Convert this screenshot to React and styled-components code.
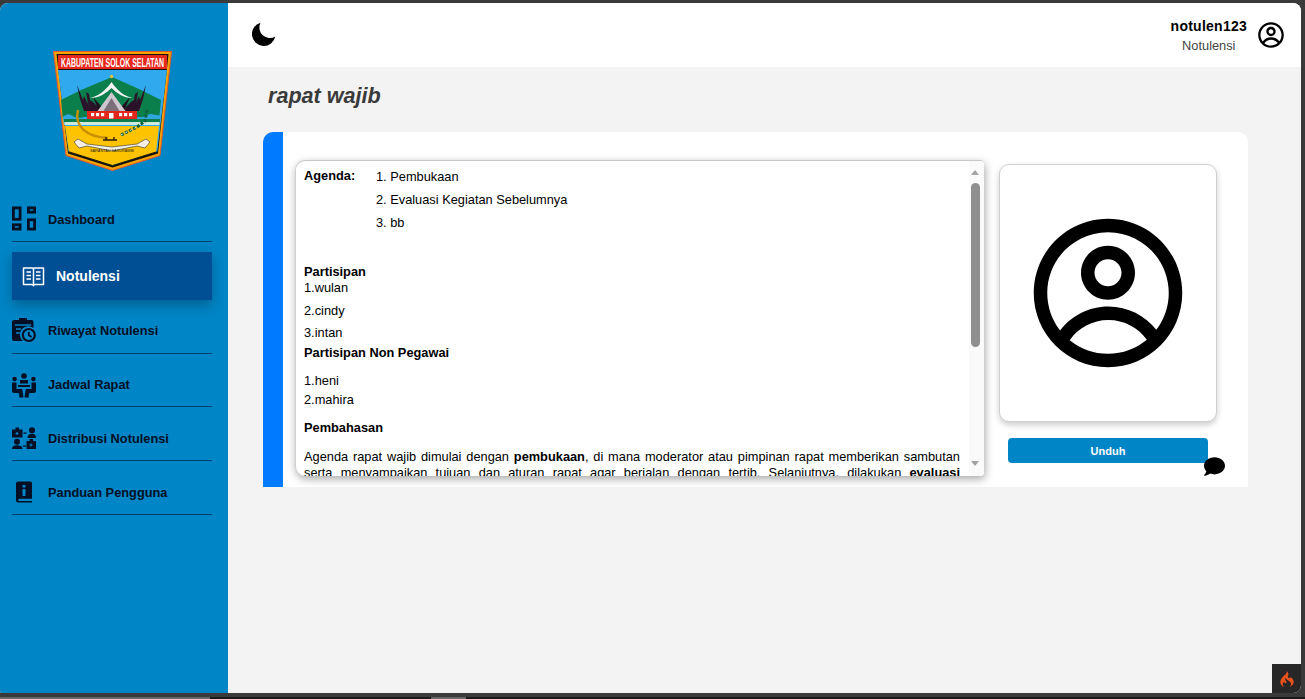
import React from "react";
import styled, { createGlobalStyle } from "styled-components";
import { CgProfile } from "react-icons/cg";
import { FaComment } from "react-icons/fa";
import { SiCodeigniter } from "react-icons/si";

const Global = createGlobalStyle`
  html, body { margin: 0; padding: 0; height: 100%; overflow: hidden; background: #3a3a3a; }
  #root { height: 100%; }
  * { box-sizing: border-box; }
`;

const Screen = styled.div`
  width: 1305px; height: 699px; padding-top: 3px; display: flex; flex-direction: column;
  background: #3a3a3a; font-family: "Liberation Sans", Arial, sans-serif; color: #000;
`;
const Frame = styled.div`
  position: relative; width: 1301px; height: 690px; display: flex; overflow: hidden;
  border-radius: 8px 8px 8px 2px; background: #f3f3f3;
`;
const TaskStrip = styled.div`
  margin-top: 4px; height: 2px; display: flex; background: #1a1a1a;
`;
const StripSeg = styled.div`
  height: 2px; background: #666; width: ${p => p.$w}px; margin-left: ${p => p.$l || 0}px;
`;

const Sidebar = styled.aside`
  width: 228px; flex: none; background: #0085c6; display: flex; flex-direction: column;
`;
const LogoWrap = styled.div`
  height: 194px; padding: 48px 0 0 53px;
`;
const Menu = styled.nav`
  display: flex; flex-direction: column; padding: 0 16px 0 12px;
`;
const MenuItem = styled.div`
  height: ${p => p.$h}px; display: flex; align-items: center; gap: 12px;
  border-bottom: 1px solid #04406e; font-size: 12.8px; font-weight: 700; color: #020f24;
  padding-top: ${p => p.$pt || 0}px;
`;
const ActiveItem = styled.div`
  height: 48px; margin-top: 10px; background: #004f95; color: #fff; display: flex; align-items: center;
  gap: 10px; padding-left: 10px; font-size: 14px; font-weight: 700;
  box-shadow: 0 5px 12px rgba(0,0,0,.28);
`;
const IconSlot = styled.svg`
  width: 24px; height: 26px; flex: none; display: block;
`;

const Main = styled.main`
  flex: 1; display: flex; flex-direction: column; min-width: 0;
`;
const Header = styled.header`
  height: 64px; flex: none; background: #fff; display: flex; align-items: center;
  justify-content: space-between; padding: 0 16px 0 24px;
`;
const MoonIcon = styled.svg`
  width: 24px; height: 24px; display: block; margin-top: -3px;
`;
const UserBox = styled.div`
  display: flex; align-items: center; gap: 10px;
`;
const UserText = styled.div`
  text-align: center; display: flex; flex-direction: column; gap: 4px;
`;
const UserName = styled.div`
  font-size: 14px; font-weight: 700; letter-spacing: .25px; line-height: 16px;
`;
const UserRole = styled.div`
  font-size: 12.8px; color: #444; line-height: 15px;
`;
const Title = styled.h1`
  margin: 0; padding: 16px 0 0 40px; height: 65px; font-size: 21.6px; font-style: italic;
  font-weight: 700; color: #3a3a3a; line-height: 26px;
`;
const Card = styled.section`
  margin-left: 35px; width: 985px; height: 355px; background: #fff; border-left: 20px solid #007bff;
  border-radius: 10px 10px 0 0; display: flex; gap: 15px; padding: 28px 0 0 12px; position: relative;
`;
const DocBox = styled.div`
  width: 689px; height: 316px; display: flex; overflow: hidden; background: #fff;
  border-top: 1px solid #c8c8c8; border-left: 1px solid #d0d0d0; border-radius: 10px 4px 4px 10px;
  box-shadow: 1px 3px 8px rgba(0,0,0,.35); font-size: 12.8px; line-height: 16px;
`;
const DocText = styled.div`
  flex: 1; min-width: 0; overflow: hidden; padding: 7px 9px 0 8px;
`;
const Rail = styled.div`
  width: 15px; flex: none; background: #fafafa; display: flex; flex-direction: column;
  align-items: flex-start; padding: 9px 4px 10px 2px;
`;
const ArrowUp = styled.div`
  width: 0; height: 0; border-left: 4.5px solid transparent; border-right: 4.5px solid transparent;
  border-bottom: 5px solid #a3a3a3; flex: none;
`;
const ArrowDown = styled.div`
  width: 0; height: 0; border-left: 4.5px solid transparent; border-right: 4.5px solid transparent;
  border-top: 5px solid #a3a3a3; flex: none; margin-top: auto;
`;
const Thumb = styled.div`
  width: 9px; height: 164px; margin-top: 8px; border-radius: 5px; background: #8f8f8f; flex: none;
`;
const AgendaRow = styled.div`
  display: flex; margin-bottom: 27px;
`;
const AgendaLabel = styled.strong`
  width: 72px; flex: none;
`;
const AgendaList = styled.ol`
  margin: 0; padding: 0; list-style: none;
`;
const AgendaEntry = styled.li`
  height: 23px; line-height: 17px;
`;
const Heading = styled.div`
  font-weight: 700; margin-bottom: ${p => p.$b || 0}px;
`;
const Line = styled.div`
  margin-bottom: ${p => p.$b || 0}px;
`;
const Para = styled.p`
  margin: 0; text-align: justify; text-align-last: justify; line-height: 15.5px;
`;

const Side = styled.div`
  width: 218px; flex: none; display: flex; flex-direction: column; padding-top: 4px; align-items: center;
`;
const Photo = styled.div`
  width: 218px; height: 258px; background: #fff; border: 1px solid #cfcfcf; border-radius: 10px;
  box-shadow: 0 3px 6px rgba(0,0,0,.2); display: flex; align-items: center; justify-content: center;
`;
const Download = styled.button`
  margin-top: 16px; width: 200px; height: 25px; border: 0; border-radius: 4px; background: #0085c6;
  color: #fff; font: 700 11px "Liberation Sans", Arial, sans-serif;
`;
const ChatBubble = styled.div`
  position: absolute; left: 921px; top: 324px; line-height: 0; color: #000;
`;
const DebugBadge = styled.div`
  position: absolute; right: 0; bottom: 0; width: 29px; height: 29px; background: #272727;
  display: flex; align-items: center; justify-content: center; color: #e8501c;
`;

const DashIcon = () => (
  <IconSlot viewBox="0 0 24 26">
    <g fill="none" stroke="#020f24" strokeWidth="2.8">
      <rect x="1.400" y="1.900" width="6.700" height="11.400" />
      <rect x="16.400" y="1.900" width="6.200" height="4.300" />
      <rect x="1.400" y="18.800" width="6.700" height="4.300" />
      <rect x="16.400" y="13.800" width="6.200" height="9.300" />
    </g>
  </IconSlot>
);
const BookIcon = () => (
  <IconSlot viewBox="0 0 24 26">
    <g fill="none" stroke="#fff" strokeWidth="1.500" strokeLinejoin="round">
      <path d="M1.500 5h9c.6 0 1 .4 1 1 0-.6.4-1 1-1h9v16.500h-8.500c-.8 0-1.500.4-1.500 1.300 0-.9-.7-1.300-1.500-1.300H1.500z" />
      <path d="M11.500 6v16M4.500 9h4.500M4.500 12.500h4.500M4.500 16h4.500M14 9h4.500M14 12.500h4.500M14 16h4.500" />
    </g>
  </IconSlot>
);
const HistoryIcon = () => (
  <IconSlot viewBox="0 0 24 26">
    <path fill="#020f24" d="M7 1h8v2h4.500a2 2 0 0 1 2 2v6a8 8 0 0 0-10.500 13H2a2 2 0 0 1-2-2V5a2 2 0 0 1 2-2h5z" />
    <path fill="none" stroke="#0085c6" strokeWidth="1.500" d="M3 8h16M4 12h5M4 16h4" />
    <circle cx="16.800" cy="18" r="6" fill="none" stroke="#020f24" strokeWidth="2.200" />
    <path fill="none" stroke="#020f24" strokeWidth="1.800" d="M16.800 14.800v3.500l2.800 1.700" />
  </IconSlot>
);
const MeetingIcon = () => (
  <IconSlot viewBox="0 0 24 26">
    <g fill="#020f24">
      <circle cx="12" cy="4" r="2.800" /><circle cx="2.600" cy="7" r="2.300" /><circle cx="21.400" cy="7" r="2.300" />
      <path d="M8 8h8v3.500H8zM6 13h12v2H6z" />
      <path d="M0 10.500h4.500v6.500h5.700l1.300 8.500H7.500l-.7-4.500H2.500A2.500 2.500 0 0 1 0 18.500z" />
      <path d="M24 10.500h-4.500v6.500h-5.700l-1.300 8.500h4l.7-4.500h4.300a2.500 2.500 0 0 0 2.500-2.500z" />
    </g>
  </IconSlot>
);
const DistIcon = () => (
  <IconSlot viewBox="0 0 24 26">
    <g fill="#020f24">
      <path d="M0 4.500h10.500v8H0zM3.500 2.500h3.500v2H3.500z" />
      <circle cx="20" cy="5.200" r="3" /><path d="M15.500 13c0-3 2-4.200 4.500-4.200s4 1.200 4 4.200z" />
      <circle cx="5" cy="16.800" r="3" /><path d="M0 24c0-3 2.500-3.800 5-3.800s5.500.8 5.500 3.800z" />
      <path d="M14.500 16h9.500v8h-9.500zM17.500 14h3.500v2h-3.500z" />
      <path d="M11.500 7.500h3v1.200h-3zM11 20.500h3v1.200h-3z" />
    </g>
    <path fill="none" stroke="#0085c6" strokeWidth="1.200" d="M5 7v3M3.500 8.500h3M19 18.500v3M17.500 20h3" />
  </IconSlot>
);
const GuideIcon = () => (
  <IconSlot viewBox="0 0 24 26">
    <path fill="#020f24" d="M6 2.500h12.500a1.500 1.500 0 0 1 1.500 1.500v15.800H6.500v2.200H20v1.500H6a2 2 0 0 1-2-2V4.500a2 2 0 0 1 2-2z" />
    <path fill="#0085c6" d="M10.500 6h3v2.500h-3zM10.500 10h3v7h-3z" />
  </IconSlot>
);
const Logo = () => (
  <svg width="119" height="120" viewBox="0 0 119 120">
    <path d="M.5.500h118L107 104.500 59.500 119.500 13 104.500z" fill="#f5a300" stroke="#e4572a" strokeWidth="1" />
    <path d="M3.500 3h112L105 102.500 59.500 116.500 15 102.500z" fill="#171208" />
    <path d="M5 19h109l-9.700 81.800-44.800 13.900-44-13.900z" fill="#30a9ee" />
    <path d="M8 49l20-10 31-13 27 12 22 11-2 20H10z" fill="#0a7f4c" />
    <path d="M9.800 66c4-4 7-3 10-1s8 2 12 1h54c6 1 9-3 12-3s6 2 10 1l-1 10H11z" fill="#2fa7dc" />
    <rect x="11" y="68" width="96" height="3" fill="#0a7f4c" />
    <rect x="11.500" y="71" width="95" height="3" fill="#cfe9da" />
    <path d="M12 75h94l-3 26-43.500 13.300-43.500-13.300z" fill="#fdc300" />
    <path d="M15.800 100.800l43.700 13.800 44.300-13.800" fill="none" stroke="#171208" strokeWidth="1" />
    <rect x="5" y="4" width="109" height="14" fill="#e8281c" />
    <text x="59.500" y="15.800" textAnchor="middle" fontFamily="Liberation Sans, sans-serif" fontWeight="700" fontSize="12" fill="#fff" textLength="103" lengthAdjust="spacingAndGlyphs">KABUPATEN SOLOK SELATAN</text>
    <circle cx="58.500" cy="25.500" r="1.800" fill="#d9c24a" />
    <path d="M24 34l3 14 4 12h9l-6-9-3-6-1 4z" fill="#2a1228" />
    <path d="M93 34l-3 14-4 12h-9l6-9 3-6 1 4z" fill="#2a1228" />
    <path d="M33 41l2 11 4 8h10l-5-5-4-4-3-2-1-6z" fill="#2a1228" />
    <path d="M85 41l-2 11-4 8H69l5-5 4-4 3-2 1-6z" fill="#2a1228" />
    <path d="M40 46l3 7 3 7h8l-6-5z" fill="#1f0f20" />
    <path d="M77 46l-3 7-3 7h-8l6-5z" fill="#1f0f20" />
    <path d="M37 47c9-2 16-8 21.500-16 5.500 8 12 14 21 16-9 0-16-5-21-10-5 5-12 10-21.500 10z" fill="#f2f2f2" />
    <path d="M58.500 41l-14 19h28z" fill="#cfc7cf" />
    <path d="M58.500 47l-8 13h16z" fill="#7b6f7b" />
    <rect x="34" y="60" width="50" height="8" fill="#e3261c" />
    <g fill="#fff"><rect x="38" y="62" width="3.200" height="3.200" /><rect x="43" y="62" width="3.200" height="3.200" /><rect x="48" y="62" width="3.200" height="3.200" /><rect x="56" y="62" width="4.500" height="5.500" /><rect x="66" y="62" width="3.200" height="3.200" /><rect x="71" y="62" width="3.200" height="3.200" /><rect x="76" y="62" width="3.200" height="3.200" /></g>
    <path d="M25 59c-4 16 8 27 30 28" fill="none" stroke="#c98f00" strokeWidth="2.400" />
    <path d="M50 89h14M53 86v3M61 86v3" stroke="#2a1a08" strokeWidth="1.300" fill="none" />
    <path d="M68 84l16-8 8-6 2-11" fill="none" stroke="#14603c" strokeWidth="3" strokeDasharray="3 1.500" />
    <path d="M68 84l16-8" fill="none" stroke="#f1f1e4" strokeWidth="1" strokeDasharray="2 3" />
    <path d="M21 91l4-3 9 5 25 3 25-3 9-5 4 3-5 6-8-2-25 5-25-5-8 2z" fill="#f4f0e6" stroke="#333" strokeWidth=".6" />
    <text x="59" y="100.500" textAnchor="middle" fontFamily="Liberation Sans, sans-serif" fontSize="4" fill="#222" textLength="44" lengthAdjust="spacingAndGlyphs">SARANTAU SASURAMBI</text>
  </svg>
);

export default function App() {
  return (
    <Screen>
      <Global />
      <Frame>
        <Sidebar>
          <LogoWrap><Logo /></LogoWrap>
          <Menu>
            <MenuItem $h={45}><DashIcon />Dashboard</MenuItem>
            <ActiveItem><BookIcon />Notulensi</ActiveItem>
            <MenuItem $h={54} $pt={7}><HistoryIcon />Riwayat Notulensi</MenuItem>
            <MenuItem $h={53} $pt={9}><MeetingIcon />Jadwal Rapat</MenuItem>
            <MenuItem $h={54} $pt={9}><DistIcon />Distribusi Notulensi</MenuItem>
            <MenuItem $h={54} $pt={9}><GuideIcon />Panduan Pengguna</MenuItem>
          </Menu>
        </Sidebar>
        <Main>
          <Header>
            <MoonIcon viewBox="0 0 24 24">
              <path d="M8.500 .8A11.800 11.800 0 1 0 23.300 14.500 A10.500 10.500 0 0 1 8.500 .8z" fill="#000" />
            </MoonIcon>
            <UserBox>
              <UserText>
                <UserName>notulen123</UserName>
                <UserRole>Notulensi</UserRole>
              </UserText>
              <CgProfile size={28} />
            </UserBox>
          </Header>
          <Title>rapat wajib</Title>
          <Card>
            <DocBox>
              <DocText>
                <AgendaRow>
                  <AgendaLabel>Agenda:</AgendaLabel>
                  <AgendaList>
                    <AgendaEntry>1. Pembukaan</AgendaEntry>
                    <AgendaEntry>2. Evaluasi Kegiatan Sebelumnya</AgendaEntry>
                    <AgendaEntry>3. bb</AgendaEntry>
                  </AgendaList>
                </AgendaRow>
                <Heading>Partisipan</Heading>
                <Line $b={7}>1.wulan</Line>
                <Line $b={6}>2.cindy</Line>
                <Line $b={4}>3.intan</Line>
                <Heading $b={12}>Partisipan Non Pegawai</Heading>
                <Line $b={3}>1.heni</Line>
                <Line $b={12}>2.mahira</Line>
                <Heading $b={13}>Pembahasan</Heading>
                <Para>
                  Agenda rapat wajib dimulai dengan <b>pembukaan</b>, di mana moderator atau pimpinan rapat memberikan sambutan serta menyampaikan tujuan dan aturan rapat agar berjalan dengan tertib. Selanjutnya, dilakukan <b>evaluasi</b>
                </Para>
              </DocText>
              <Rail>
                <ArrowUp />
                <Thumb />
                <ArrowDown />
              </Rail>
            </DocBox>
            <Side>
              <Photo><CgProfile size={162} /></Photo>
              <Download>Unduh</Download>
            </Side>
            <ChatBubble><FaComment size={21} /></ChatBubble>
          </Card>
        </Main>
        <DebugBadge><SiCodeigniter size={16} /></DebugBadge>
      </Frame>
      <TaskStrip>
        <StripSeg $w={210} />
        <StripSeg $l={221} $w={35} />
      </TaskStrip>
    </Screen>
  );
}
